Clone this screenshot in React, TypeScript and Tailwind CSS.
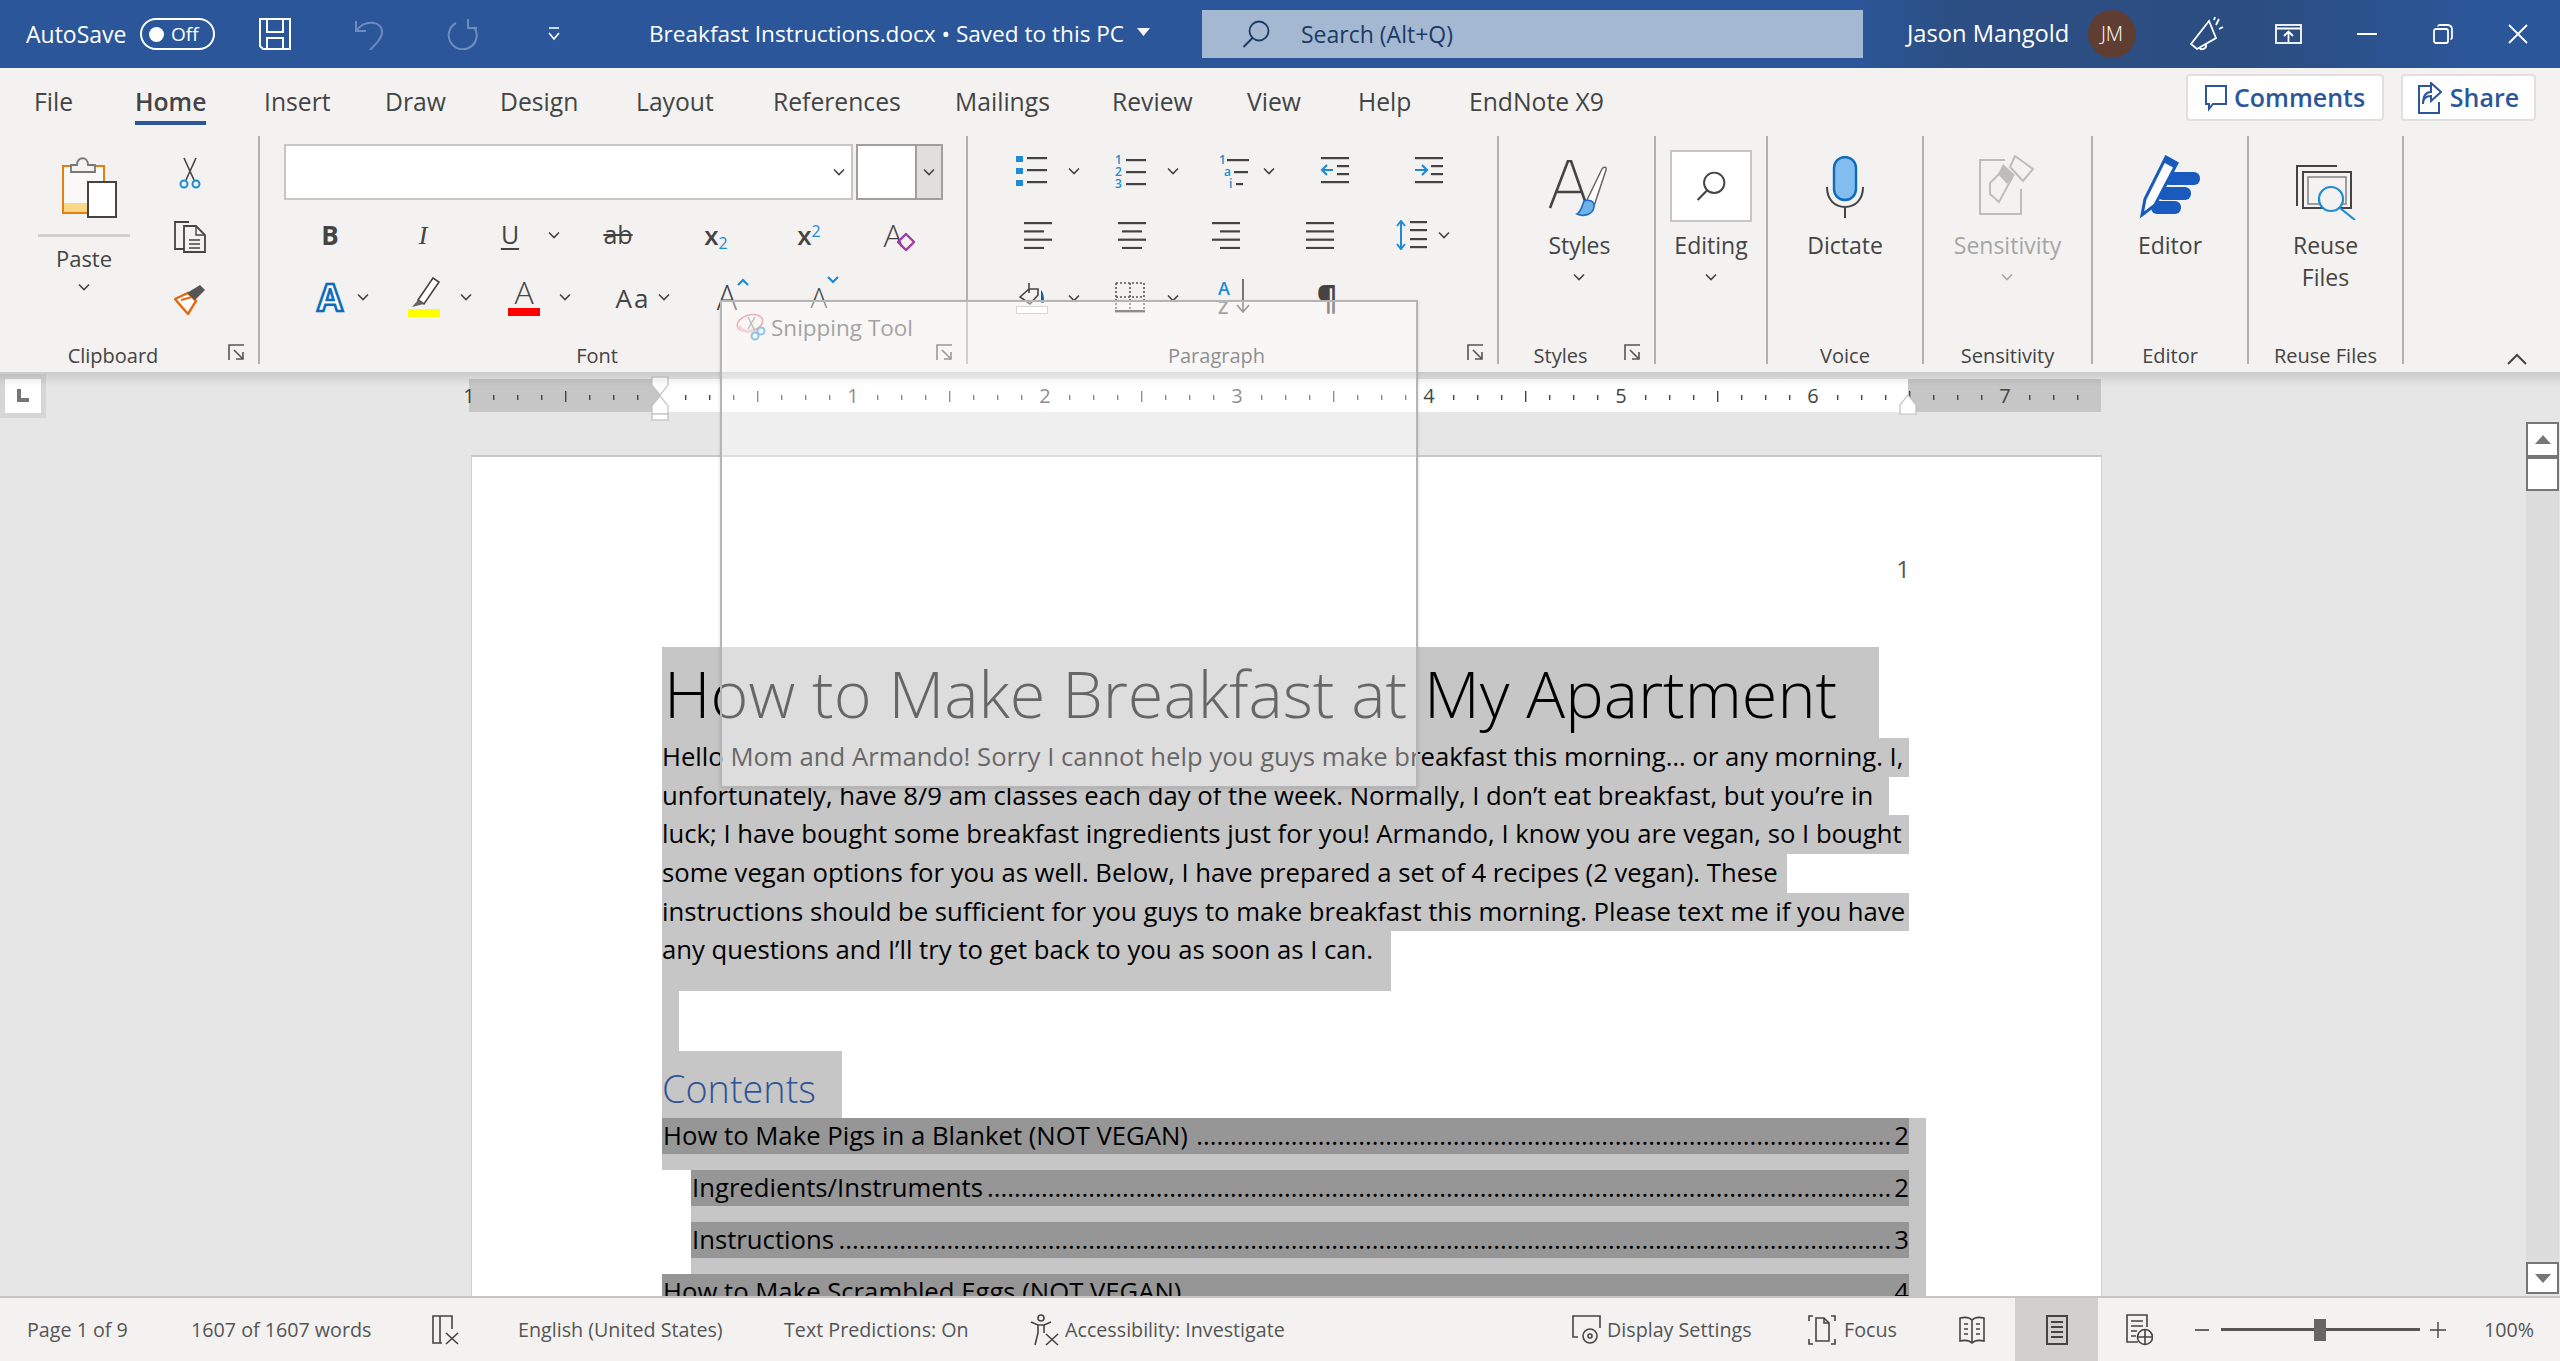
import type { ReactNode } from "react";

const Chev = ({ c = "#444" }: { c?: string }) => (
  <svg width="12" height="8" viewBox="0 0 12 8" className="shrink-0">
    <path d="M1 1.5 6 6.5 11 1.5" fill="none" stroke={c} strokeWidth="1.6" />
  </svg>
);

const Launcher = () => (
  <svg width="17" height="17" viewBox="0 0 17 17">
    <path d="M16 1H1v15M6 6l9 9M15 8v7H8" fill="none" stroke="#555" strokeWidth="1.6" />
  </svg>
);

const Lens = ({ s = 28, c = "#444" }: { s?: number; c?: string }) => (
  <svg width={s} height={s} viewBox="0 0 28 28">
    <circle cx="17" cy="11" r="9.5" fill="none" stroke={c} strokeWidth="1.8" />
    <path d="M10.5 18 1.5 27" stroke={c} strokeWidth="2" />
  </svg>
);

const Lines = ({ rows }: { rows: [number, number][] }) => (
  <svg width="28" height="28" viewBox="0 0 28 28">
    {rows.map(([x, w], i) => (
      <rect key={i} x={x} y={1 + i * 8.3} width={w} height="2.2" fill="#444" />
    ))}
  </svg>
);

const Bullets = () => (
  <svg width="32" height="30" viewBox="0 0 32 30">
    {[1, 13, 25].map((y) => (
      <g key={y}>
        <rect x="0" y={y - 1} width="7" height="6" fill="#1e8bd3" />
        <rect x="11" y={y} width="20" height="2.2" fill="#444" />
      </g>
    ))}
  </svg>
);

const Numbered = () => (
  <svg width="32" height="44" viewBox="0 0 32 44">
    {["1", "2", "3"].map((n, i) => (
      <g key={n}>
        <text x="0" y={15 + i * 12} fontSize="12" fontWeight="600" fill="#1e8bd3">{n}</text>
        <rect x="11" y={10 + i * 12} width="20" height="2.2" fill="#444" />
      </g>
    ))}
  </svg>
);

const Multilevel = () => (
  <svg width="32" height="44" viewBox="0 0 32 44">
    <text x="0" y="15" fontSize="12" fontWeight="600" fill="#1e8bd3">1</text>
    <rect x="8" y="10" width="22" height="2.2" fill="#444" />
    <text x="5" y="27" fontSize="12" fontWeight="600" fill="#1e8bd3">a</text>
    <rect x="15" y="22" width="14" height="2.2" fill="#444" />
    <text x="10" y="39" fontSize="12" fontWeight="600" fill="#1e8bd3">i</text>
    <rect x="17" y="34" width="7" height="2.2" fill="#444" />
  </svg>
);

const Indent = ({ more }: { more?: boolean }) => (
  <svg width="30" height="30" viewBox="0 0 30 30">
    <rect x="1" y="1" width="28" height="2.2" fill="#444" />
    <rect x="17" y="9" width="12" height="2.2" fill="#444" />
    <rect x="17" y="17" width="12" height="2.2" fill="#444" />
    <rect x="1" y="25" width="28" height="2.2" fill="#444" />
    <path
      d={more ? "M1 14h11M8 9l5 5-5 5" : "M13 14H2M7 9l-5 5 5 5"}
      fill="none"
      stroke="#1e8bd3"
      strokeWidth="2.2"
    />
  </svg>
);

const LineSpacing = () => (
  <svg width="32" height="30" viewBox="0 0 32 30">
    <path d="M5 1v28M1 6l4-5 4 5M1 24l4 5 4-5" fill="none" stroke="#1e8bd3" strokeWidth="2" />
    <rect x="14" y="1" width="17" height="2.2" fill="#444" />
    <rect x="14" y="9" width="17" height="2.2" fill="#444" />
    <rect x="14" y="18" width="17" height="2.2" fill="#444" />
    <rect x="14" y="26" width="17" height="2.2" fill="#444" />
  </svg>
);

const Shading = () => (
  <svg width="32" height="32" viewBox="0 0 32 32">
    <path d="M13 1v10M4 15l9-8 9 0v6l-8 9z" fill="none" stroke="#444" strokeWidth="1.6" />
    <path d="M25 8c3 3 3 9 3 13h-3z" fill="#0f5ea8" />
    <rect x="0.5" y="24.5" width="31" height="7" fill="#fff" stroke="#bbb" />
  </svg>
);

const Borders = () => (
  <svg width="30" height="32" viewBox="0 0 30 32">
    <path
      d="M1 1h28M1 15h28M15 1v28M1 1v28M29 1v28"
      fill="none"
      stroke="#555"
      strokeWidth="1.6"
      strokeDasharray="2 2"
    />
    <rect x="0" y="28" width="30" height="2.4" fill="#444" />
  </svg>
);

const Clipboard = () => (
  <svg width="56" height="62" viewBox="0 0 56 62">
    <rect x="1" y="10" width="41" height="47" fill="#faf9f8" stroke="#e3800f" strokeWidth="2" />
    <rect x="2" y="47" width="26" height="9" fill="#fbd78c" />
    <path d="M9 16V9h6c0-9 11-9 11 0h7v7z" fill="#f3f2f1" stroke="#777" strokeWidth="1.8" />
    <rect x="26" y="26" width="28" height="35" fill="#fff" stroke="#444" strokeWidth="2" />
  </svg>
);

const Scissors = () => (
  <svg width="22" height="32" viewBox="0 0 22 32">
    <path d="M5 1 15 23M17 1 7 23" stroke="#444" strokeWidth="1.6" fill="none" />
    <circle cx="5" cy="27" r="3.5" fill="none" stroke="#1e8bd3" strokeWidth="2" />
    <circle cx="17" cy="27" r="3.5" fill="none" stroke="#1e8bd3" strokeWidth="2" />
  </svg>
);

const CopyIcon = () => (
  <svg width="32" height="32" viewBox="0 0 32 32">
    <path d="M15 1H1v27h9" fill="none" stroke="#444" strokeWidth="1.8" />
    <path d="M10 5h12l9 9v17H10z" fill="none" stroke="#444" strokeWidth="1.8" />
    <path d="M22 5v9h9M15 19h11M15 23h11M15 27h11" fill="none" stroke="#444" strokeWidth="1.4" />
  </svg>
);

const Painter = () => (
  <svg width="32" height="30" viewBox="0 0 32 30">
    <path d="M1 14 14 8l8 8-8 13z" fill="#fff" stroke="#e3680f" strokeWidth="2.4" />
    <path d="M7 15 18 12" stroke="#e3680f" strokeWidth="2" />
    <path d="M13 8 21 15 31 5 26 0z" fill="#555" />
  </svg>
);

const Highlighter = () => (
  <svg width="32" height="40" viewBox="0 0 32 40">
    <path d="M10 23 25 1l6 4-15 22z" fill="#fff" stroke="#444" strokeWidth="1.6" />
    <path d="M10 23l6 4-12 3z" fill="#666" />
    <rect x="0" y="32" width="32" height="8" fill="#ffff00" />
  </svg>
);

const StylesIcon = () => (
  <svg width="62" height="60" viewBox="0 0 62 60">
    <path d="M2 48 20 1h3l14 40M9 32h24" fill="none" stroke="#444" strokeWidth="2.6" />
    <path d="M38 42 54 9c2-3 5-2 4 1L46 46" fill="#fff" stroke="#666" strokeWidth="1.5" />
    <path d="M36 41c5-2 11 0 10 6-1 8-11 10-17 7 4-2 5-8 7-13z" fill="#6fb2ea" stroke="#1f6fc0" strokeWidth="1.6" />
  </svg>
);

const Mic = () => (
  <svg width="40" height="62" viewBox="0 0 40 62">
    <rect x="9" y="1" width="22" height="43" rx="11" fill="#83bcef" stroke="#0f6cbd" strokeWidth="2.4" />
    <path d="M2 31c0 13 8 20 18 20s18-7 18-20M20 51v11" fill="none" stroke="#444" strokeWidth="2" />
  </svg>
);

const Sensitivity = () => (
  <svg width="56" height="60" viewBox="0 0 56 60">
    <path d="M26 5H1v54h41V34" fill="none" stroke="#bdbdbd" strokeWidth="2" />
    <path d="M9 26 22 13l9 8-13 24-9-8z" fill="none" stroke="#bdbdbd" strokeWidth="2" transform="translate(2 2)" />
    <path d="M24 9 36 20l-8 9-9-10z" fill="#bdbdbd" />
    <path d="M36 1 54 14l-10 12-13-14z" fill="none" stroke="#bdbdbd" strokeWidth="2" />
  </svg>
);

const EditorIcon = () => (
  <svg width="62" height="64" viewBox="0 0 62 64">
    <rect x="24" y="17" width="37" height="13" rx="6" fill="#185abd" />
    <rect x="18" y="32" width="34" height="13" rx="6" fill="#185abd" />
    <rect x="12" y="46" width="30" height="13" rx="6" fill="#185abd" />
    <path d="M3 60 6 44 27 2l11 6-22 42z" fill="#fff" stroke="#185abd" strokeWidth="3" />
    <path d="M27 2l11 6-3 5-11-6z" fill="#185abd" />
  </svg>
);

const ReuseIcon = () => (
  <svg width="62" height="56" viewBox="0 0 62 56">
    <path d="M2 42V2h40" fill="none" stroke="#444" strokeWidth="2" />
    <rect x="8" y="8" width="48" height="36" fill="none" stroke="#444" strokeWidth="2" />
    <rect x="13" y="13" width="38" height="27" fill="none" stroke="#888" strokeWidth="1.6" />
    <circle cx="36" cy="35" r="12" fill="#f3f2f1" stroke="#1e8bd3" strokeWidth="2.2" />
    <path d="M45 44 60 56" stroke="#1e8bd3" strokeWidth="2.2" />
  </svg>
);

const Megaphone = () => (
  <svg width="34" height="34" viewBox="0 0 34 34" fill="none" stroke="#fff" strokeWidth="1.8">
    <path d="M1 27 19 4l7 17-19 11zM9 30c2 4 8 2 7-3" />
    <path d="M26 8l3-6M29 12l4-2M24 3l1-3" />
  </svg>
);

const Ico = ({ children, w, h }: { children: ReactNode; w: number; h: number }) => (
  <svg width={w} height={h} viewBox={`0 0 ${w} ${h}`} fill="none" stroke="#444" strokeWidth="1.6" className="shrink-0">
    {children}
  </svg>
);

const Group = ({
  w,
  label,
  launcher,
  children,
}: {
  w: string;
  label: string;
  launcher?: boolean;
  children: ReactNode;
}) => (
  <div className={`${w} h-[228px] flex flex-col shrink-0 border-r-2 border-[#b3b0ad]`}>
    <div className="flex-1 min-h-0">{children}</div>
    <div className={`relative h-[26px] mb-[-5px] flex justify-center items-center text-[20px] text-[#444] ${launcher ? "pr-[32px]" : ""}`}>
      {label}
      {launcher && (
        <span className="absolute right-[13px] top-[1px] flex">
          <Launcher />
        </span>
      )}
    </div>
  </div>
);

const BigButton = ({
  icon,
  label,
  second,
  chev,
  dim,
  iconBox,
}: {
  icon: ReactNode;
  label: string;
  second?: string;
  chev?: boolean;
  dim?: boolean;
  iconBox: string;
}) => (
  <div className={`flex flex-col items-center text-[23px] ${dim ? "text-[#a6a6a6]" : "text-[#444]"}`}>
    <div className={`${iconBox} flex items-start justify-center`}>{icon}</div>
    <div className="leading-[32px] h-[32px]">{label}</div>
    {second && <div className="leading-[32px] h-[32px]">{second}</div>}
    {chev && (
      <div className="h-[32px] flex items-center">
        <Chev c={dim ? "#a6a6a6" : "#444"} />
      </div>
    )}
  </div>
);

const Tabs = [
  { t: "File", c: "w-[102px]" },
  { t: "Home", c: "w-[128px]" },
  { t: "Insert", c: "w-[121px]" },
  { t: "Draw", c: "w-[115px]" },
  { t: "Design", c: "w-[136px]" },
  { t: "Layout", c: "w-[137px]" },
  { t: "References", c: "w-[182px]" },
  { t: "Mailings", c: "w-[157px]" },
  { t: "Review", c: "w-[135px]" },
  { t: "View", c: "w-[111px]" },
  { t: "Help", c: "w-[111px]" },
  { t: "EndNote X9", c: "w-[180px]" },
];

const Ruler = () => {
  const ticks: ReactNode[] = [];
  for (let x = 493; x < 2090; x += 24) {
    if ((x - 661) % 192 === 0) continue;
    const long = (x - 565) % 192 === 0;
    ticks.push(
      <rect
        key={x}
        x={x - 469}
        y={long ? 12 : 16}
        width="1.4"
        height={long ? 11 : 5}
        fill="#444"
      />,
    );
  }
  return (
    <div className="relative ml-[469px] w-[1632px] h-[33px] flex shrink-0">
      <div className="w-[191px] bg-[#c6c6c6]" />
      <div className="w-[1248px] bg-white" />
      <div className="w-[193px] bg-[#c6c6c6]" />
      <svg width="1632" height="33" viewBox="0 0 1632 33" className="absolute left-0 top-0 overflow-visible">
        {ticks}
        {[
          [0, "1"],
          [384, "1"],
          [576, "2"],
          [768, "3"],
          [960, "4"],
          [1152, "5"],
          [1344, "6"],
          [1536, "7"],
        ].map(([x, n]) => (
          <text key={x} x={x} y="24" fontSize="20" textAnchor="middle" fill="#444">
            {n}
          </text>
        ))}
        <path d="M183 -2h16v8l-8 10-8-10z" fill="#fff" stroke="#c0c0c0" strokeWidth="1.2" />
        <path d="M183 35v-8l8-10 8 10v8z" fill="#fff" stroke="#c0c0c0" strokeWidth="1.2" />
        <rect x="183" y="35" width="16" height="6" fill="#fff" stroke="#c0c0c0" strokeWidth="1.2" />
        <path d="M1431 35v-9l8-10 8 10v9z" fill="#fff" stroke="#c0c0c0" strokeWidth="1.2" />
      </svg>
    </div>
  );
};

const Body = [
  { t: "Hello Mom and Armando! Sorry I cannot help you guys make breakfast this morning… or any morning. I,", c: "w-[1247px] h-[39px]" },
  { t: "unfortunately, have 8/9 am classes each day of the week. Normally, I don’t eat breakfast, but you’re in", c: "w-[1227px] h-[38px]" },
  { t: "luck; I have bought some breakfast ingredients just for you! Armando, I know you are vegan, so I bought", c: "w-[1247px] h-[39px]" },
  { t: "some vegan options for you as well. Below, I have prepared a set of 4 recipes (2 vegan). These", c: "w-[1125px] h-[39px]" },
  { t: "instructions should be sufficient for you guys to make breakfast this morning. Please text me if you have", c: "w-[1247px] h-[38px]" },
  { t: "any questions and I’ll try to get back to you as soon as I can.", c: "w-[729px] h-[60px]" },
];

const TocRow = ({ t, n, dots, sub, last }: { t: string; n: string; dots: number; sub?: boolean; last?: boolean }) => (
  <div className={sub ? "ml-[29px]" : ""}>
    <div className="flex bg-[#c6c6c6]">
      <div className={`${sub ? "w-[1218px]" : "w-[1247px]"} h-[36px] bg-[#969696] flex items-center justify-between pl-[1px] leading-[36px] whitespace-nowrap text-black`}>
        <span>{t}</span>
        <span className="ml-auto mr-[3px]">{".".repeat(dots)}</span>
        <span>{n}</span>
      </div>
      <div className="w-[17px]" />
    </div>
    {!last && <div className="h-[16px] bg-[#c6c6c6] w-full" />}
  </div>
);

export default function App() {
  return (
    <div className="relative w-[2560px] h-[1361px] overflow-hidden bg-[#e6e6e6] font-['Open_Sans',sans-serif]">
      {/* title bar */}
      <div className="h-[68px] flex items-center text-white bg-[linear-gradient(90deg,#2b579a_72%,#2c4f85_76%,#2c4d80_88%,#2b579a_97%)]">
        <div className="ml-[26px] w-[114px] text-[23px] whitespace-nowrap">AutoSave</div>
        <div className="w-[75px] h-[32px] rounded-full border-2 border-white flex items-center pl-[7px] gap-[7px] text-[19px]">
          <span className="w-[15px] h-[15px] rounded-full bg-white" />
          Off
        </div>
        <div className="ml-[44px] flex">
          <svg width="32" height="32" viewBox="0 0 32 32" fill="none" stroke="#fff" strokeWidth="2">
            <path d="M1 1h30v30H4l-3-3zM8 1v13h16V1M8 31V20h16v11" />
          </svg>
        </div>
        <div className="ml-[64px] flex">
          <svg width="28" height="32" viewBox="0 0 28 32" fill="none" stroke="#6d8dbd" strokeWidth="2">
            <path d="M1 3v10h10M2 12C10 1 27 3 27 14c0 6-6 12-12 18" />
          </svg>
        </div>
        <div className="ml-[64px] flex">
          <svg width="32" height="32" viewBox="0 0 32 32" fill="none" stroke="#6d8dbd" strokeWidth="2">
            <path d="M21 1v9h9M27 9A14 14 0 1 1 9 5" />
          </svg>
        </div>
        <div className="ml-[69px] flex">
          <svg width="12" height="14" viewBox="0 0 12 14" fill="none" stroke="#fff" strokeWidth="1.6">
            <path d="M1 1h10M1 6l5 6 5-6" />
          </svg>
        </div>
        <div className="ml-[89px] w-[488px] text-[22.6px] whitespace-nowrap">Breakfast Instructions.docx • Saved to this PC</div>
        <svg width="13" height="8" viewBox="0 0 13 8" className="shrink-0 -mt-[4px]">
          <path d="M0 0h13L6.500 8z" fill="#fff" />
        </svg>
        <div className="ml-[52px] w-[661px] h-[48px] bg-[#a5b8d1] flex items-center pl-[40px] shrink-0 text-[23px] text-[#1c3a66]">
          <Lens c="#1c3a66" />
          <span className="ml-[31px]">Search (Alt+Q)</span>
        </div>
        <div className="ml-[44px] w-[181px] text-[23.7px] whitespace-nowrap">Jason Mangold</div>
        <div className="w-[48px] h-[48px] rounded-full bg-[#5f3d31] flex items-center justify-center text-[20px] font-light shrink-0">JM</div>
        <div className="ml-[54px] flex">
          <Megaphone />
        </div>
        <div className="ml-[51px] flex">
          <svg width="27" height="20" viewBox="0 0 27 20" fill="none" stroke="#fff" strokeWidth="1.8">
            <rect x="1" y="1" width="25" height="18" />
            <path d="M1 4.500h25M13.500 18V8M9 12l4.500-4.500L18 12" />
          </svg>
        </div>
        <div className="ml-[55px] w-[20px] h-[2px] bg-white" />
        <div className="ml-[56px] flex">
          <svg width="20" height="20" viewBox="0 0 20 20" fill="none" stroke="#fff" strokeWidth="1.8">
            <rect x="1" y="5" width="14" height="14" rx="2" />
            <path d="M5 2.500C5 1.500 6 1 7 1h8c2 0 4 2 4 4v8c0 1-.5 2-1.500 2" />
          </svg>
        </div>
        <div className="ml-[55px] flex">
          <svg width="20" height="20" viewBox="0 0 20 20" stroke="#fff" strokeWidth="1.8">
            <path d="M1 1l18 18M19 1 1 19" />
          </svg>
        </div>
      </div>

      {/* tabs */}
      <div className="h-[57px] bg-[#f3f2f1] flex pl-[34px] text-[24.7px] text-[#444]">
        {Tabs.map((tab) => (
          <div key={tab.t} className={`${tab.c} shrink-0 pt-[15px] whitespace-nowrap`}>
            <span
              className={
                tab.t === "Home"
                  ? "inline-block -ml-px leading-[32px] pb-[3px] border-b-[6px] border-[#2b579a] font-semibold"
                  : "inline-block leading-[32px]"
              }
            >
              {tab.t}
            </span>
          </div>
        ))}
        <div className="ml-auto flex gap-[17px] pt-[6px] pr-[24px] text-[25px] text-[#2b579a] font-semibold">
          <div className="w-[198px] h-[47px] bg-white border-2 border-[#e1dfdd] rounded-[4px] flex items-center justify-center gap-[7px]">
            <svg width="22" height="30" viewBox="0 0 22 30" fill="none" stroke="#2b579a" strokeWidth="2">
              <path d="M1 3h20v18H8l-4 5v-5H1z" />
            </svg>
            Comments
          </div>
          <div className="w-[135px] h-[47px] bg-white border-2 border-[#e1dfdd] rounded-[4px] flex items-center justify-center gap-[8px]">
            <svg width="24" height="32" viewBox="0 0 24 32" fill="none" stroke="#2b579a" strokeWidth="2">
              <path d="M13 4H1v27h20V20M13 1l10 9-10 9v-5c-5 0-8 3-8 8 0-8 3-12 8-12z" />
            </svg>
            Share
          </div>
        </div>
      </div>

      {/* ribbon */}
      <div className="h-[247px] bg-[#f3f2f1] flex pt-[11px] text-[#444] relative">
        <Group w="w-[260px]" label="Clipboard" launcher>
          <div className="flex pl-[38px]">
            <div className="w-[92px] flex flex-col items-center">
              <div className="mt-[20px] h-[66px] pl-[24px] self-start">
                <Clipboard />
              </div>
              <div className="w-[92px] h-[3px] bg-[#d2d0ce] mt-[12px]" />
              <div className="text-[22px] leading-[32px] mt-[5px]">Paste</div>
              <div className="mt-[9px] flex">
                <Chev />
              </div>
            </div>
            <div className="ml-[44px] flex flex-col items-center">
              <div className="mt-[21px] flex">
                <Scissors />
              </div>
              <div className="mt-[32px] flex">
                <CopyIcon />
              </div>
              <div className="mt-[32px] flex">
                <Painter />
              </div>
            </div>
          </div>
        </Group>

        <Group w="w-[708px]" label="Font" launcher>
          <div className="flex mt-[8px] ml-[24px]">
            <div className="w-[569px] h-[56px] bg-white border-2 border-[#c8c6c4] flex items-center justify-end pr-[6px]">
              <Chev />
            </div>
            <div className="ml-[3px] w-[87px] h-[56px] bg-white border-2 border-[#a19f9d] flex">
              <div className="flex-1" />
              <div className="w-[26px] bg-[#e1dfdd] border-l-2 border-[#a19f9d] flex items-center justify-center">
                <Chev />
              </div>
            </div>
          </div>
          <div className="flex items-center h-[40px] mt-[15px]">
            <div className="ml-[40px] w-[60px] text-center text-[26px] font-bold">B</div>
            <div className="ml-[33px] w-[60px] text-center text-[26px] italic font-['Liberation_Serif',serif]">I</div>
            <div className="ml-[27px] w-[60px] text-center text-[25px] underline underline-offset-[4px]">U</div>
            <div className="ml-[4px] w-[20px] flex justify-center"><Chev /></div>
            <div className="ml-[24px] w-[60px] text-center text-[25px] line-through">ab</div>
            <div className="ml-[38px] w-[60px] text-center text-[26px] font-semibold">
              x<sub className="text-[16px] text-[#1e8bd3] font-normal">2</sub>
            </div>
            <div className="ml-[33px] w-[60px] text-center text-[26px] font-semibold">
              x<sup className="text-[16px] text-[#1e8bd3] font-normal">2</sup>
            </div>
            <div className="ml-[30px] w-[60px] flex items-center justify-center text-[32px] font-light">
              A
              <svg width="18" height="18" viewBox="0 0 18 18" className="-ml-[6px] mt-[14px]">
                <path d="M9 1 17 9l-8 8-8-8z" fill="none" stroke="#a33ba9" strokeWidth="2.4" />
              </svg>
            </div>
          </div>
          <div className="flex items-center h-[40px] mt-[22px]">
            <div className="ml-[40px] w-[60px] text-center text-[37px] font-bold text-white [-webkit-text-stroke:2.5px_#0f6cbd] [text-shadow:0_0_3px_#7cc0ee]">A</div>
            <div className="-ml-[7px] w-[20px] flex justify-center"><Chev /></div>
            <div className="ml-[35px] w-[32px] flex"><Highlighter /></div>
            <div className="ml-[16px] w-[20px] flex justify-center"><Chev /></div>
            <div className="ml-[32px] w-[32px] flex flex-col items-center">
              <span className="text-[32px] leading-[28px] font-light">A</span>
              <span className="w-[32px] h-[8px] bg-[#ff0000] mt-[2px]" />
            </div>
            <div className="ml-[15px] w-[20px] flex justify-center"><Chev /></div>
            <div className="ml-[38px] w-[40px] text-center text-[26px] tracking-[2px] whitespace-nowrap mt-[3px]">Aa</div>
            <div className="ml-[1px] w-[20px] flex justify-center"><Chev /></div>
            <div className="ml-[39px] w-[40px] flex items-start justify-center text-[34px] leading-[44px] font-light">
              A
              <svg width="12" height="8" viewBox="0 0 12 8" className="mt-[3px]">
                <path d="M1 7 6 2l5 5" fill="none" stroke="#1e8bd3" strokeWidth="2.2" />
              </svg>
            </div>
            <div className="ml-[52px] w-[40px] flex items-start justify-center text-[28px] leading-[48px] font-light">
              A
              <svg width="12" height="8" viewBox="0 0 12 8" className="mt-[3px]">
                <path d="M1 1l5 5 5-5" fill="none" stroke="#1e8bd3" strokeWidth="2.2" />
              </svg>
            </div>
          </div>
        </Group>

        <Group w="w-[531px]" label="Paragraph" launcher>
          <div className="flex items-center h-[40px] mt-[15px]">
            <div className="ml-[48px] w-[32px] flex"><Bullets /></div>
            <div className="ml-[20px] flex"><Chev /></div>
            <div className="ml-[35px] w-[32px] flex"><Numbered /></div>
            <div className="ml-[20px] flex"><Chev /></div>
            <div className="ml-[40px] w-[32px] flex"><Multilevel /></div>
            <div className="ml-[12px] flex"><Chev /></div>
            <div className="ml-[45px] flex"><Indent /></div>
            <div className="ml-[64px] flex"><Indent more /></div>
          </div>
          <div className="flex items-center h-[40px] mt-[24px]">
            <div className="ml-[56px] flex"><Lines rows={[[0, 28], [0, 20], [0, 28], [0, 20]]} /></div>
            <div className="ml-[66px] flex"><Lines rows={[[0, 28], [4, 20], [0, 28], [4, 20]]} /></div>
            <div className="ml-[66px] flex"><Lines rows={[[0, 28], [8, 20], [0, 28], [8, 20]]} /></div>
            <div className="ml-[66px] flex"><Lines rows={[[0, 28], [0, 28], [0, 28], [0, 28]]} /></div>
            <div className="ml-[62px] flex"><LineSpacing /></div>
            <div className="ml-[10px] flex"><Chev /></div>
          </div>
          <div className="flex items-center h-[40px] mt-[23px]">
            <div className="ml-[48px] flex"><Shading /></div>
            <div className="ml-[20px] flex"><Chev /></div>
            <div className="ml-[35px] flex"><Borders /></div>
            <div className="ml-[22px] flex"><Chev /></div>
            <div className="ml-[39px] w-[32px] flex flex-col text-[18px] leading-[19px] font-semibold text-[#1e8bd3] relative">
              <span>A</span>
              <span className="text-[#666]">Z</span>
              <svg width="14" height="34" viewBox="0 0 14 34" className="absolute left-[18px] top-0">
                <path d="M7 0v33M1 26l6 7 6-7" fill="none" stroke="#555" strokeWidth="1.6" />
              </svg>
            </div>
            <div className="ml-[66px] w-[22px] text-[32px] leading-[40px] font-bold text-center">¶</div>
          </div>
        </Group>

        <Group w="w-[157px]" label="Styles" launcher>
          <div className="mt-[24px] flex justify-center pl-[6px]">
            <BigButton icon={<StylesIcon />} label="Styles" chev iconBox="h-[69px] w-[62px]" />
          </div>
        </Group>

        <Group w="w-[112px]" label=" ">
          <div className="mt-[14px] flex flex-col items-center text-[23px]">
            <div className="w-[82px] h-[72px] bg-white border-2 border-[#c8c6c4] flex items-center justify-center">
              <Lens s={30} />
            </div>
            <div className="leading-[32px] mt-[7px]">Editing</div>
            <div className="h-[32px] flex items-center"><Chev /></div>
          </div>
        </Group>

        <Group w="w-[156px]" label="Voice">
          <div className="mt-[20px] flex justify-center">
            <BigButton icon={<Mic />} label="Dictate" iconBox="h-[73px]" />
          </div>
        </Group>

        <Group w="w-[169px]" label="Sensitivity">
          <div className="mt-[19px] flex justify-center">
            <BigButton icon={<Sensitivity />} label="Sensitivity" chev dim iconBox="h-[74px]" />
          </div>
        </Group>

        <Group w="w-[156px]" label="Editor">
          <div className="mt-[19px] flex justify-center">
            <BigButton icon={<EditorIcon />} label="Editor" iconBox="h-[74px]" />
          </div>
        </Group>

        <Group w="w-[155px]" label="Reuse Files">
          <div className="mt-[20px] flex justify-center">
            <BigButton icon={<ReuseIcon />} label="Reuse" second="Files" iconBox="h-[73px] pt-[8px]" />
          </div>
        </Group>

        <div className="flex-1 flex justify-end items-end pb-[7px] pr-[33px]">
          <svg width="20" height="12" viewBox="0 0 20 12">
            <path d="M1 11 10 2l9 9" fill="none" stroke="#444" strokeWidth="2" />
          </svg>
        </div>
      </div>

      {/* document area */}
      <div className="relative h-[924px] flex overflow-hidden bg-[#e6e6e6]">
        <div className="w-[2526px] shrink-0 pt-[7px]">
          <Ruler />
          <div className="ml-[471px] w-[1631px] h-[900px] mt-[43px] bg-white border-l border-r border-[#d0d0d0] border-t-2 border-t-[#c8c8c8]">
            <div className="h-[190px] pt-[97px] pr-[191px] text-right text-[24px] leading-[30px] text-[#555]">1</div>
            <div className="ml-[190px] text-black text-[25.7px] whitespace-nowrap">
              <div className="w-[1217px] h-[91px] bg-[#c6c6c6] pl-[2px] pt-[3px] text-[64.7px] leading-[87px] font-light">
                How to Make Breakfast at My Apartment
              </div>
              {Body.map((l) => (
                <div key={l.t} className={`${l.c} bg-[#c6c6c6] leading-[38px]`}>
                  {l.t}
                </div>
              ))}
              <div className="w-[17px] h-[60px] bg-[#c6c6c6]" />
              <div className="w-[180px] h-[67px] bg-[#c6c6c6] pt-[14px] text-[37.8px] leading-[48px] text-[#2f5496] font-light">
                Contents
              </div>
              <div className="w-[1264px]">
                <TocRow t="How to Make Pigs in a Blanket (NOT VEGAN)" n="2" dots={103} />
                <TocRow t="Ingredients/Instruments" n="2" dots={134} sub />
                <TocRow t="Instructions" n="3" dots={156} sub />
                <TocRow t="How to Make Scrambled Eggs (NOT VEGAN)" n="4" dots={104} last />
              </div>
            </div>
          </div>
        </div>
        {/* scrollbar */}
        <div className="w-[33px] flex flex-col mt-[50px] h-[872px] bg-[#dcdcdc]">
          <div className="h-[35px] bg-white border-[2px] border-[#767676] flex items-center justify-center">
            <span className="w-0 h-0 border-x-[8px] border-x-transparent border-b-[9px] border-b-[#767676]" />
          </div>
          <div className="h-[34px] bg-white border-[2px] border-[#767676]" />
          <div className="flex-1" />
          <div className="h-[32px] bg-white border-[2px] border-[#767676] flex items-center justify-center">
            <span className="w-0 h-0 border-x-[8px] border-x-transparent border-t-[9px] border-t-[#767676]" />
          </div>
        </div>
        {/* ruler corner button and ribbon shadow */}
        <div className="absolute left-0 top-[2px] w-[46px] h-[44px] border-[5px] border-[#d6d6d6] bg-white flex items-center justify-center">
          <svg width="14" height="14" viewBox="0 0 14 14">
            <path d="M1 0h4v9h8v4H1z" fill="#767676" />
          </svg>
        </div>
        <div className="absolute inset-x-0 top-0 h-[14px] bg-[linear-gradient(180deg,rgba(0,0,0,0.12),rgba(0,0,0,0))] pointer-events-none" />
      </div>

      {/* status bar */}
      <div className="h-[65px] border-t-2 border-[#c8c6c4] bg-[#f3f2f1] flex items-center text-[19.7px] text-[#555] whitespace-nowrap">
        <div className="ml-[27px] w-[164px]">Page 1 of 9</div>
        <div className="w-[241px]">1607 of 1607 words</div>
        <Ico w={30} h={30}>
          <path d="M10 28H1V1h9M10 1h10v13M8 1v27M14 18l12 11M26 18 14 29" />
        </Ico>
        <div className="ml-[56px] w-[266px]">English (United States)</div>
        <div className="w-[246px]">Text Predictions: On</div>
        <Ico w={32} h={32}>
          <circle cx="11" cy="4" r="3" />
          <path d="M1 8l7 3h6l7-3M8 11v8l-3 12M14 11v8M16 20l12 11M28 20 16 31" />
        </Ico>
        <div className="ml-[3px] w-[507px]">Accessibility: Investigate</div>
        <Ico w={30} h={30}>
          <path d="M6 22H1V1h27v12" />
          <circle cx="18" cy="21" r="7" />
          <circle cx="18" cy="21" r="2" />
        </Ico>
        <div className="ml-[5px] w-[201px]">Display Settings</div>
        <Ico w={28} h={30}>
          <path d="M5 1H1v5M23 1h4v5M5 29H1v-5M23 29h4v-5" />
          <path d="M8 3h8l5 5v18H8zM16 3v5h5" />
        </Ico>
        <div className="ml-[8px] w-[115px]">Focus</div>
        <Ico w={26} h={30}>
          <path d="M13 5C10 2 5 2 1 3v23c4-1 9-1 12 2 3-3 8-3 12-2V3c-4-1-9-1-12 2zM13 5v23M5 9h4M5 14h4M5 19h4M17 9h4M17 14h4M17 19h4" />
        </Ico>
        <div className="ml-[30px] w-[83px] self-stretch bg-[#d2d0ce] flex items-center justify-center">
          <Ico w={22} h={30}>
            <path d="M1 1h20v28H1zM5 7h12M5 12h12M5 17h12M5 22h12" strokeWidth="2" />
          </Ico>
        </div>
        <div className="ml-[28px] flex">
          <Ico w={27} h={32}>
            <path d="M12 28H1V1h20v12M5 7h12M5 12h12M5 17h6M5 22h5" />
            <circle cx="19" cy="23" r="7.500" />
            <path d="M11.500 23h15M19 15.500v15" />
          </Ico>
        </div>
        <div className="ml-[42px] w-[14px] h-[2px] bg-[#666]" />
        <div className="ml-[12px] w-[199px] h-[3px] bg-[#555] flex items-center">
          <div className="ml-[93px] w-[12px] h-[22px] bg-[#666] shrink-0" />
        </div>
        <div className="ml-[10px] flex">
          <Ico w={16} h={16}>
            <path d="M0 8h16M8 0v16" strokeWidth="1.4" />
          </Ico>
        </div>
        <div className="ml-[38px]">100%</div>
      </div>

      {/* snipping tool window dragged over the page */}
      <div className="absolute left-[720px] top-[300px] w-[698px] h-[488px] bg-white/40 border-2 border-[#b5b5b5] shadow-[0_1px_3px_rgba(0,0,0,0.15)] pl-[14px] pt-[9px]">
        <div className="flex items-center gap-[5px] text-[#a3a3a3] text-[22.5px]">
          <svg width="30" height="30" viewBox="0 0 30 30" fill="none" className="shrink-0">
            <ellipse cx="14" cy="10" rx="13" ry="8" transform="rotate(-15 14 10)" stroke="#eeb1b1" strokeWidth="1.6" />
            <path d="M3 13c3 6 10 6 15 4" stroke="#f4d5d5" strokeWidth="3" />
            <path d="M12 4l7 14M19 4 12 16" stroke="#bbb" strokeWidth="1.4" />
            <circle cx="19" cy="23" r="3.500" stroke="#8cc4ea" strokeWidth="2" />
            <circle cx="25" cy="18" r="3.500" stroke="#8cc4ea" strokeWidth="2" />
          </svg>
          Snipping Tool
        </div>
      </div>
    </div>
  );
}
